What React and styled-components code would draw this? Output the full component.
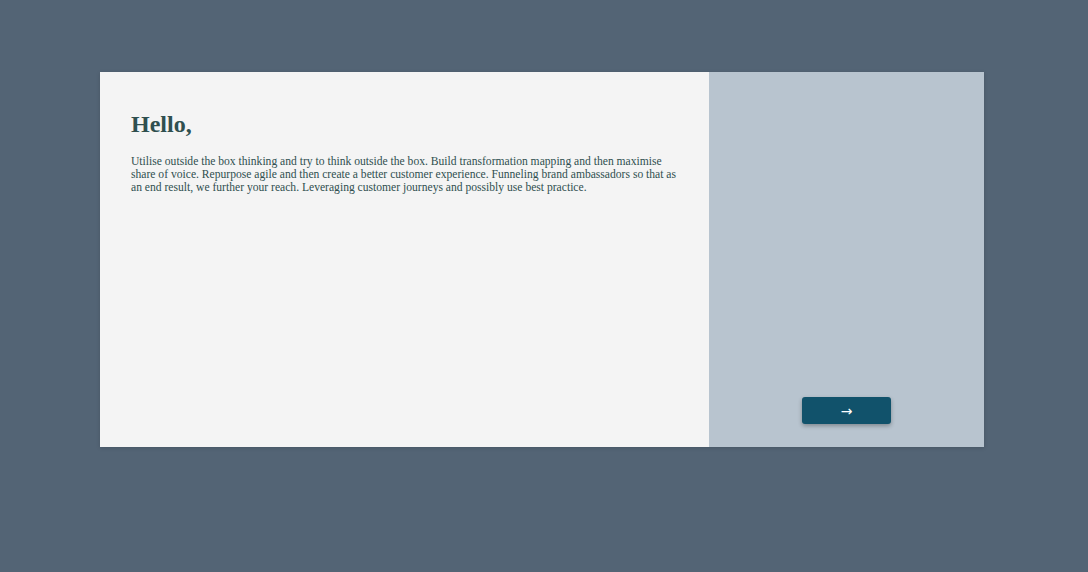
import React from 'react';
import styled, { createGlobalStyle } from 'styled-components';

const GlobalStyle = createGlobalStyle`
  html, body {
    margin: 0;
    padding: 0;
    background: #536475;
    font-family: "Liberation Serif", "Times New Roman", serif;
  }
`;

const Page = styled.div`
  min-height: 572px;
  padding: 72px 0 0 100px;
  box-sizing: border-box;
`;

const Card = styled.div`
  display: flex;
  width: 884px;
  height: 375px;
  box-shadow: 0 1px 4px rgba(0, 0, 0, 0.15);
`;

const Content = styled.div`
  flex: 0 0 609px;
  background: #f4f4f4;
  padding: 39px 26px 39px 31px;
  box-sizing: border-box;
  color: #2f4f4f;
`;

const Title = styled.h2`
  margin: 0;
  font-size: 24px;
  font-weight: bold;
`;

const Text = styled.p`
  margin: 17px 0 0;
  font-size: 11.6px;
  line-height: 13px;
`;

const Side = styled.div`
  flex: 1;
  background: #b8c4cf;
  display: flex;
  flex-direction: column;
  justify-content: flex-end;
  align-items: center;
  padding-bottom: 23px;
`;

const NextButton = styled.button`
  width: 89px;
  height: 27px;
  border: none;
  border-radius: 3px;
  background: #11526b;
  color: #ffffff;
  font-family: "DejaVu Sans", sans-serif;
  font-size: 14px;
  line-height: 1;
  cursor: pointer;
  box-shadow: 0 2px 4px rgba(0, 0, 0, 0.3);
`;

function App() {
  return (
    <>
      <GlobalStyle />
      <Page>
        <Card>
          <Content>
            <Title>Hello,</Title>
            <Text>
              Utilise outside the box thinking and try to think outside the box. Build transformation mapping and then maximise share of voice. Repurpose agile and then create a better customer experience. Funneling brand ambassadors so that as an end result, we further your reach. Leveraging customer journeys and possibly use best practice.
            </Text>
          </Content>
          <Side>
            <NextButton>→</NextButton>
          </Side>
        </Card>
      </Page>
    </>
  );
}

export default App;
